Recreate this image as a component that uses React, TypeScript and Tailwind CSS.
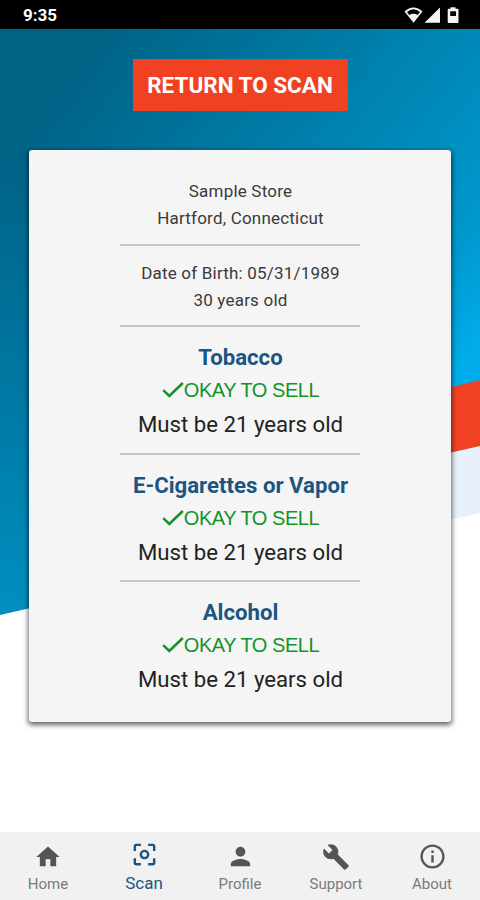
import React from "react";
import {
  MdBuild,
  MdCenterFocusWeak,
  MdHome,
  MdInfoOutline,
  MdPerson,
} from "react-icons/md";

const products = [
  { name: "Tobacco", age: 21 },
  { name: "E-Cigarettes or Vapor", age: 21 },
  { name: "Alcohol", age: 21 },
];

const tabs = [
  { label: "Home", icon: <MdHome size={28} />, active: false },
  { label: "Scan", icon: <MdCenterFocusWeak size={29} />, active: true },
  { label: "Profile", icon: <MdPerson size={29} />, active: false },
  { label: "Support", icon: <MdBuild size={28} />, active: false },
  { label: "About", icon: <MdInfoOutline size={29} />, active: false },
];

const StatusBar = () => (
  <div className="h-[29px] bg-black text-white flex items-center justify-between pl-[23px] pr-[20px]">
    <span className="text-[17px] font-bold leading-none pt-[2px]">9:35</span>
    <svg width="56" height="18" viewBox="404 6 56 18" fill="#f4f4f4">
      <path
        fillRule="evenodd"
        d="M404.500 11.500Q413.500 3.500 422.500 11.500L413.500 22.800ZM407 11.900L409.300 14.900Q413.500 12.500 417.700 14.900L420 11.900Q413.500 6.800 407 11.900Z"
      />
      <path d="M424.500 22.800L440 7.500V22.800Z" />
      <path
        fillRule="evenodd"
        d="M450.500 7.300H455.500V8.800H457.500Q458.500 8.800 458.500 9.800V22Q458.500 23 457.500 23H448.700Q447.700 23 447.700 22V9.800Q447.700 8.800 448.700 8.800H450.500ZM450.200 11.300V16H456V11.300Z"
      />
    </svg>
  </div>
);

const Backdrop = () => (
  <svg
    className="absolute inset-0 -z-10"
    width="480"
    height="900"
    viewBox="0 0 480 900"
  >
    <defs>
      <linearGradient
        id="sky"
        gradientUnits="userSpaceOnUse"
        x1="60"
        y1="80"
        x2="500"
        y2="430"
      >
        <stop offset="0" stopColor="#006285" />
        <stop offset="0.55" stopColor="#008aba" />
        <stop offset="0.74" stopColor="#0098ce" />
        <stop offset="0.88" stopColor="#00adea" />
      </linearGradient>
      <linearGradient
        id="skyLeft"
        gradientUnits="userSpaceOnUse"
        x1="0"
        y1="150"
        x2="0"
        y2="610"
      >
        <stop offset="0" stopColor="#006285" />
        <stop offset="0.5" stopColor="#0077a2" />
        <stop offset="1" stopColor="#008fc0" />
      </linearGradient>
    </defs>
    <rect width="480" height="900" fill="#ffffff" />
    <path d="M240 29H480V513L240 566Z" fill="#e8f1fa" />
    <path d="M240 29H480V446L240 500Z" fill="#f04123" />
    <path d="M0 29H480V380L240 440H0Z" fill="url(#sky)" />
    <path d="M0 150H240V560L0 615Z" fill="url(#skyLeft)" />
  </svg>
);

const Check = () => (
  <svg width="22" height="20" viewBox="0 0 22 20" fill="none">
    <path d="M1.200 10.200L7.300 16L20.800 3" stroke="currentColor" strokeWidth="2.500" />
  </svg>
);

const Divider = () => <hr className="w-60 border-t-2 border-[#c6c6c6]" />;

const App = () => {
  return (
    <div className="relative isolate flex h-[900px] w-[480px] flex-col overflow-hidden font-[Roboto,sans-serif]">
      <Backdrop />
      <StatusBar />

      <main className="flex flex-1 flex-col items-center pt-[30px]">
        <button className="h-[52px] w-[215px] bg-[#f04123] pt-[1px] text-[22.5px] font-bold text-white whitespace-nowrap">
          RETURN TO SCAN
        </button>

        {/* Scan result */}
        <section className="mt-[39px] flex h-[572px] w-[422px] flex-col items-center rounded-[3px] bg-[#f5f5f5] pt-[28px] text-center text-[#3a3a3a] shadow-[0_2px_5px_1px_rgba(0,0,0,0.6)]">
          <div className="h-[66px] pl-px text-[17px] leading-[27px] tracking-[0.2px]">
            <p>Sample Store</p>
            <p>Hartford, Connecticut</p>
          </div>
          <Divider />
          <div className="h-[79px] pl-px pt-[14px] text-[17px] leading-[27px] tracking-[0.2px]">
            <p>Date of Birth: 05/31/1989</p>
            <p>30 years old</p>
          </div>
          {products.map((product) => (
            <React.Fragment key={product.name}>
              <Divider />
              <div className="flex h-[125.6px] flex-col items-center pl-px pt-[13px]">
                <h2 className="text-[22.2px] leading-[34px] font-bold text-[#1b5682]">
                  {product.name}
                </h2>
                <p className="flex items-center text-[20px] leading-[32px] tracking-[-0.45px] font-[Liberation_Sans,sans-serif] text-[#15922a]">
                  <Check />
                  OKAY TO SELL
                </p>
                <p className="text-[22.2px] leading-[36px] text-[#222222]">
                  Must be {product.age} years old
                </p>
              </div>
            </React.Fragment>
          ))}
        </section>
      </main>

      <nav className="grid h-[68px] grid-cols-5 bg-[#f1f1f1]">
        {tabs.map((tab) => (
          <div
            key={tab.label}
            className={
              tab.active
                ? "flex flex-col items-center pt-[8px] text-[#1b5682]"
                : "flex flex-col items-center pt-[10px] text-[#555555]"
            }
          >
            <div className="flex h-[29px] items-center">{tab.icon}</div>
            <span
              className={
                tab.active
                  ? "mt-[4px] text-[17px] leading-[20px]"
                  : "mt-[3px] text-[15px] leading-[20px] text-[#7a7a7a]"
              }
            >
              {tab.label}
            </span>
          </div>
        ))}
      </nav>
    </div>
  );
};

export default App;
